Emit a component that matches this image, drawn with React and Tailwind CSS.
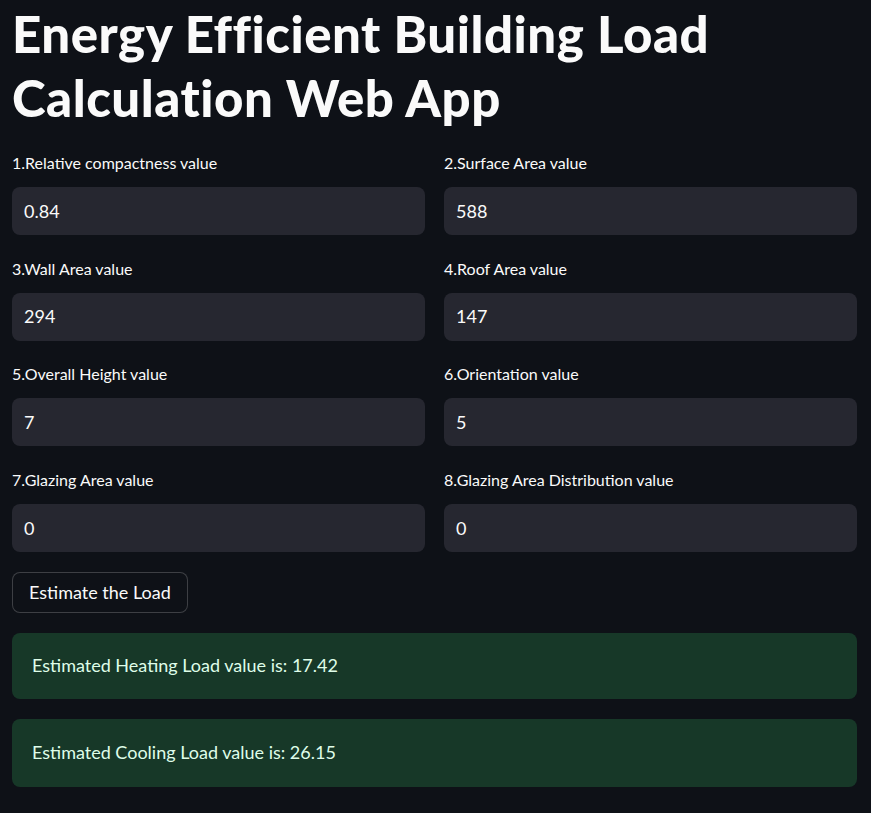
import React from "react";

const fields = [
  ["1.Relative compactness value", "0.84", "2.Surface Area value", "588"],
  ["3.Wall Area value", "294", "4.Roof Area value", "147"],
  ["5.Overall Height value", "7", "6.Orientation value", "5"],
  ["7.Glazing Area value", "0", "8.Glazing Area Distribution value", "0"],
];

function Field({ label, value }) {
  return (
    <div className="flex flex-col">
      <div className="h-6 leading-6 text-[16px] text-[#fafafa] mb-3">{label}</div>
      <div className="h-12 rounded-lg bg-[#262730] flex items-center px-3 text-[18px] text-[#fafafa]">
        {value}
      </div>
    </div>
  );
}

export default function App() {
  return (
    <div
      className="min-h-[813px] w-full bg-[#0e1117] text-[#fafafa] pl-3 pr-[14px]"
      style={{ fontFamily: "Lato, 'Noto Sans', sans-serif" }}
    >
      <h1 className="pt-[2px] text-[51px] leading-[64px] font-black tracking-[0.5px] text-[#fafafa]">
        Energy Efficient Building Load Calculation Web App
      </h1>
      <div className="mt-[21px] flex flex-col gap-[21.7px]">
        {fields.map((r, i) => (
          <div key={i} className="grid grid-cols-2 gap-[19px]">
            <Field label={r[0]} value={r[1]} />
            <Field label={r[2]} value={r[3]} />
          </div>
        ))}
      </div>
      <button className="mt-[19.6px] h-[41px] px-4 rounded-lg border border-[#fafafa33] bg-[#0e1117] text-[18px] text-[#fafafa]">
        Estimate the Load
      </button>
      <div className="mt-5 h-[66px] rounded-lg bg-[#173828] flex items-center px-5 text-[18px] text-[#dffde9]">
        Estimated Heating Load value is: 17.42
      </div>
      <div className="mt-5 h-[68px] rounded-lg bg-[#173828] flex items-center px-5 text-[18px] text-[#dffde9]">
        Estimated Cooling Load value is: 26.15
      </div>
    </div>
  );
}
